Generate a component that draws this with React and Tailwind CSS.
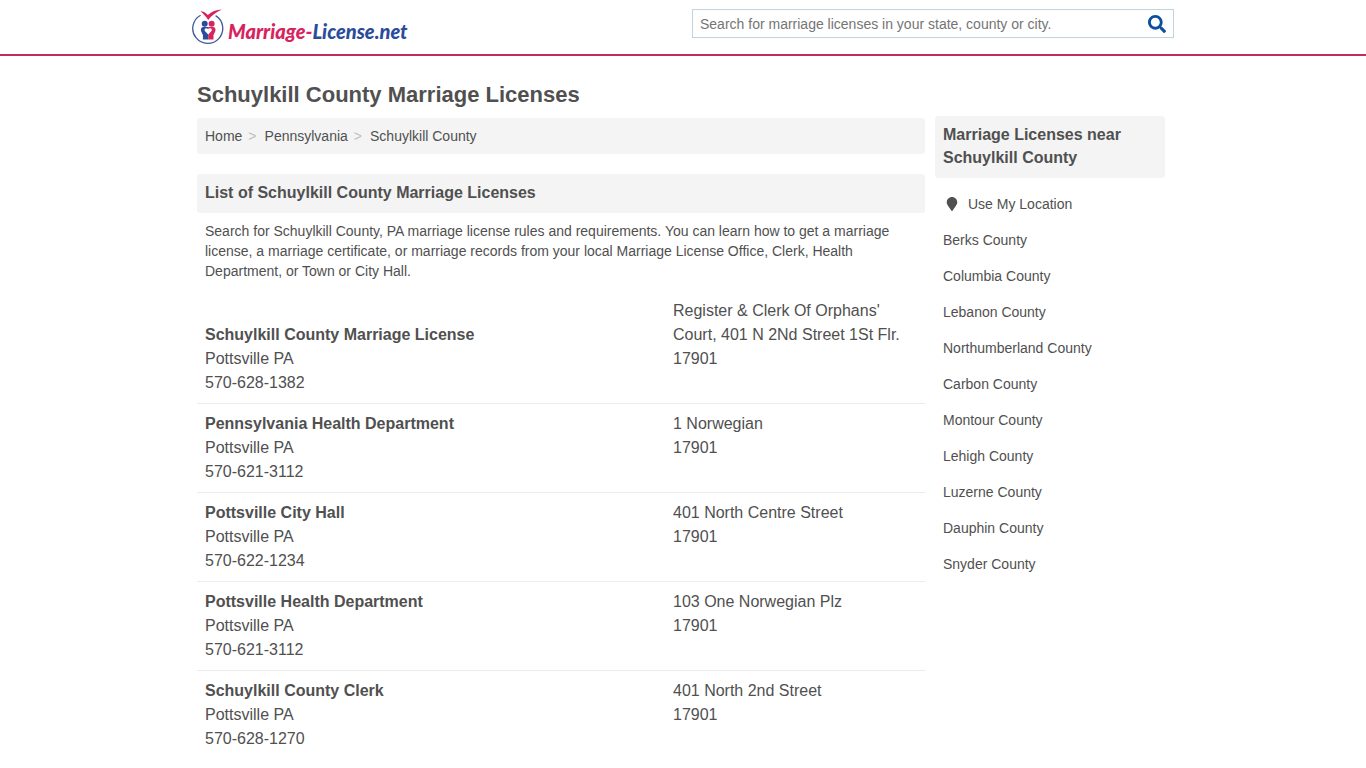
import { FaSearch, FaMapMarker } from "react-icons/fa";

const offices = [
  { name: "Schuylkill County Marriage License", phone: "570-628-1382", street: "Register & Clerk Of Orphans' Court, 401 N 2Nd Street 1St Flr." },
  { name: "Pennsylvania Health Department", phone: "570-621-3112", street: "1 Norwegian" },
  { name: "Pottsville City Hall", phone: "570-622-1234", street: "401 North Centre Street" },
  { name: "Pottsville Health Department", phone: "570-621-3112", street: "103 One Norwegian Plz" },
  { name: "Schuylkill County Clerk", phone: "570-628-1270", street: "401 North 2nd Street" },
];

const counties = [
  "Berks County",
  "Columbia County",
  "Lebanon County",
  "Northumberland County",
  "Carbon County",
  "Montour County",
  "Lehigh County",
  "Luzerne County",
  "Dauphin County",
  "Snyder County",
];

function LogoMark() {
  return (
    <svg viewBox="0 0 32 38" className="h-[38px] w-8 shrink-0" aria-hidden="true">
      <path d="M8.600 7.200A15 15 0 1 0 23.600 7.600" fill="none" stroke="#3f5a9c" strokeWidth="1.300" />
      <path d="M8.500 3.200C11.500 3.200 13.800 4.800 15.800 7C19.500 3.600 24 1.800 30 1.600C24.500 4 19.500 7.500 16.200 12C14 8.500 11.500 6 8.500 3.200Z" fill="#d6245f" />
      <circle cx="12.700" cy="15.700" r="3" fill="#2b4c9b" />
      <circle cx="19.600" cy="15.700" r="3" fill="#d6245f" />
      <path d="M16.200 19H11.500C9.200 19 8.600 21 9 23L10.900 27V31.500H16.200Z" fill="#2b4c9b" />
      <path d="M16.200 19H20.900C23.200 19 23.800 21 23.400 23L21.500 27V31.500H16.200Z" fill="#d6245f" />
      <path d="M16.200 26.600L12.900 23C11.500 20.800 14.500 19.200 16.200 21.200C17.900 19.200 20.900 20.800 19.500 23Z" fill="#fff" />
    </svg>
  );
}

function Header() {
  return (
    <header className="border-b-2 border-[#c42a62]">
      <div className="mx-auto flex h-[54px] max-w-[982px] items-start justify-between">
        <a href="#" className="flex items-center gap-1 pt-2" aria-label="Marriage-License.net">
          <LogoMark />
          <span className="pt-2 font-[Lato,sans-serif] text-[20px] leading-6 font-black italic text-[#2b4c9b]">
            <span className="text-[#d6245f]">Marriage-</span>License.net
          </span>
        </a>
        <form className="mt-[9px] flex h-[29px] w-[482px] items-center border border-[#c3d3dd]" onSubmit={(e) => e.preventDefault()}>
          <input
            type="text"
            aria-label="Search for marriage licenses"
            placeholder="Search for marriage licenses in your state, county or city."
            className="h-full min-w-0 flex-1 px-[7px] text-sm outline-none placeholder:text-[#757575]"
          />
          <button type="submit" aria-label="Search" className="px-[7px] text-[#0b509f]">
            <FaSearch size={18} />
          </button>
        </form>
      </div>
    </header>
  );
}

function Office({ name, phone, street }) {
  return (
    <li className="grid grid-cols-[minmax(0,468fr)_minmax(0,244fr)] items-end border-b border-[#ececec] p-2 text-base leading-6 last:border-b-0">
      <a href="#" className="font-bold">{name}</a>
      <span>{street}</span>
      <span>Pottsville PA</span>
      <span>17901</span>
      <span>{phone}</span>
    </li>
  );
}

export default function App() {
  return (
    <div className="bg-white font-['Liberation_Sans',Arial,sans-serif] text-sm text-[#505050]">
      <Header />
      <div className="mx-auto flex max-w-[982px] items-start gap-[10px] pt-[26px] pr-[9px] pl-[5px]">
        <main className="min-w-0 flex-1">
          <h1 className="text-[22px] leading-[26px] font-bold">Schuylkill County Marriage Licenses</h1>
          <nav aria-label="Breadcrumb" className="mt-[10px] rounded-[3px] bg-[#f4f4f4] p-2 leading-5">
            <ol className="flex gap-2">
              <li className="flex gap-[6px]">
                <a href="#">Home</a>
                <span className="text-[#c0c0c0]">&gt;</span>
              </li>
              <li className="flex gap-[6px]">
                <a href="#">Pennsylvania</a>
                <span className="text-[#c0c0c0]">&gt;</span>
              </li>
              <li>
                <a href="#">Schuylkill County</a>
              </li>
            </ol>
          </nav>
          <h2 className="mt-5 rounded-[3px] bg-[#f4f4f4] px-2 pt-[7px] pb-[9px] text-base leading-[23px] font-bold">
            List of Schuylkill County Marriage Licenses
          </h2>
          <p className="px-2 pt-2 pb-[9px] leading-5">
            Search for Schuylkill County, PA marriage license rules and requirements. You can learn how to get a marriage
            license, a marriage certificate, or marriage records from your local Marriage License Office, Clerk, Health
            Department, or Town or City Hall.
          </p>
          <ul className="mt-px">
            {offices.map((office) => (
              <Office key={office.name} {...office} />
            ))}
          </ul>
        </main>
        <aside className="w-[230px] shrink-0 pt-[34px]">
          <h2 className="rounded-[3px] bg-[#f4f4f4] px-2 pt-[7px] pb-[9px] text-base leading-[23px] font-bold">
            Marriage Licenses near Schuylkill County
          </h2>
          <ul className="mt-2 px-2 leading-5">
            <li className="py-2">
              <a href="#" className="flex items-center gap-2">
                <span className="flex w-[17px] justify-center">
                  <FaMapMarker size={14} />
                </span>
                Use My Location
              </a>
            </li>
            {counties.map((county) => (
              <li key={county} className="py-2">
                <a href="#">{county}</a>
              </li>
            ))}
          </ul>
        </aside>
      </div>
    </div>
  );
}
